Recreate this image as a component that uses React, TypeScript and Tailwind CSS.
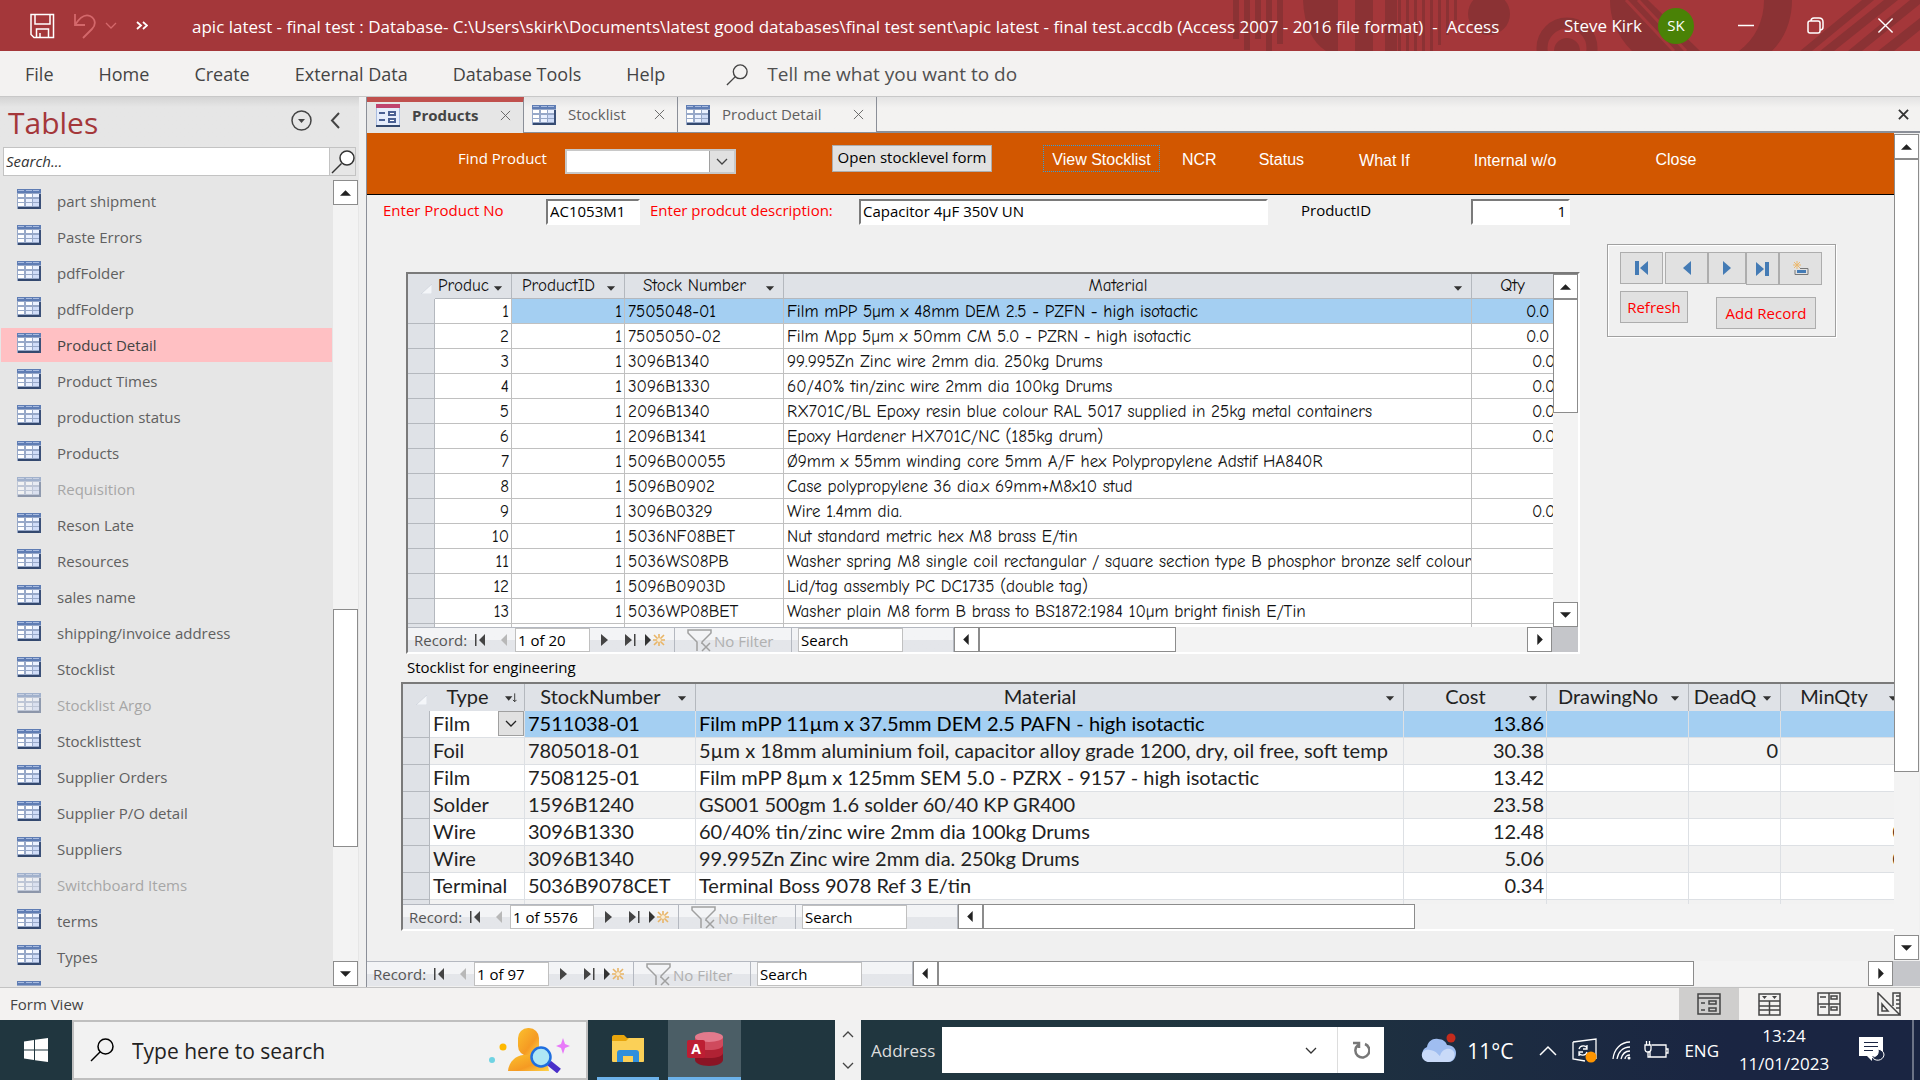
import type { ReactNode } from "react";

const tables = [
  { name: "part shipment" },
  { name: "Paste Errors" },
  { name: "pdfFolder" },
  { name: "pdfFolderp" },
  { name: "Product Detail", selected: true },
  { name: "Product Times" },
  { name: "production status" },
  { name: "Products" },
  { name: "Requisition", hidden: true },
  { name: "Reson Late" },
  { name: "Resources" },
  { name: "sales name" },
  { name: "shipping/invoice address" },
  { name: "Stocklist" },
  { name: "Stocklist Argo", hidden: true },
  { name: "Stocklisttest" },
  { name: "Supplier Orders" },
  { name: "Supplier P/O detail" },
  { name: "Suppliers" },
  { name: "Switchboard Items", hidden: true },
  { name: "terms" },
  { name: "Types" },
  { name: "" },
];

const parts = [
  ["7505048-01", "Film mPP 5µm x 48mm DEM 2.5 - PZFN - high isotactic", "0.0"],
  ["7505050-02", "Film Mpp 5µm x 50mm CM 5.0 - PZRN - high isotactic", "0.0"],
  ["3096B1340", "99.995Zn Zinc wire 2mm dia. 250kg Drums", "0.0"],
  ["3096B1330", "60/40% tin/zinc wire 2mm dia 100kg Drums", "0.0"],
  ["2096B1340", "RX701C/BL Epoxy resin blue colour RAL 5017 supplied in 25kg metal containers", "0.0"],
  ["2096B1341", "Epoxy Hardener HX701C/NC (185kg drum)", "0.0"],
  ["5096B00055", "Ø9mm x 55mm winding core 5mm A/F hex Polypropylene Adstif HA840R", ""],
  ["5096B0902", "Case polypropylene 36 dia.x 69mm+M8x10 stud", ""],
  ["3096B0329", "Wire 1.4mm dia.", "0.0"],
  ["5036NF08BET", "Nut standard metric hex M8 brass E/tin", ""],
  ["5036WS08PB", "Washer spring M8 single coil rectangular / square section type B phosphor bronze self colour", ""],
  ["5096B0903D", "Lid/tag assembly PC DC1735 (double tag)", ""],
  ["5036WP08BET", "Washer plain M8 form B brass to BS1872:1984 10µm bright finish E/Tin", ""],
];

const stock = [
  ["Film", "7511038-01", "Film mPP 11µm x 37.5mm DEM 2.5 PAFN - high isotactic", "13.86", "", ""],
  ["Foil", "7805018-01", "5µm x 18mm aluminium foil, capacitor alloy grade 1200, dry, oil free, soft temp", "30.38", "0", ""],
  ["Film", "7508125-01", "Film mPP 8µm x 125mm SEM 5.0 - PZRX - 9157 - high isotactic", "13.42", "", ""],
  ["Solder", "1596B1240", "GS001 500gm 1.6 solder 60/40 KP GR400", "23.58", "", ""],
  ["Wire", "3096B1330", "60/40% tin/zinc wire 2mm dia 100kg Drums", "12.48", "", "0"],
  ["Wire", "3096B1340", "99.995Zn Zinc wire 2mm dia. 250kg Drums", "5.06", "", "0"],
  ["Terminal", "5036B9078CET", "Terminal Boss 9078 Ref 3 E/tin", "0.34", "", ""],
];

function TableIcon({ className = "" }: { className?: string }) {
  return (
    <svg width="24" height="20" viewBox="0 0 24 20" className={`shrink-0 ${className}`} shapeRendering="crispEdges">
      <rect width="24" height="20" fill="#97a8c8" />
      <rect width="24" height="4" fill="#5f7db4" />
      <path d="M1 1h6M9 1h6M16 1h6" stroke="#a9bce0" transform="translate(0 .5)" />
      <path d="M1 5h6v3H1zM1 10h6v3H1zM1 14h6v3H1zM9 5h6v3H9z" fill="#fff" />
      <path d="M9 10h6v3H9zM9 14h6v3H9zM16 5h6v3h-6z" fill="#eaf1ff" />
      <path d="M16 10h6v3h-6zM16 14h6v3h-6z" fill="#cfdcf8" />
      <path d="M1 18h23v2H1z" fill="#34496f" />
      <path d="M22 5h2v15h-2z" fill="#3b5078" />
    </svg>
  );
}

function FormIcon() {
  return (
    <svg width="24" height="23" viewBox="0 0 24 23" className="shrink-0" shapeRendering="crispEdges">
      <rect width="24" height="23" fill="#a9bce0" />
      <rect x="1" y="4" width="22" height="17" fill="#e6edfb" />
      <rect width="24" height="4" fill="#c0446e" />
      <path d="M3 9h6M3 16h6" stroke="#4a6093" strokeWidth="2" />
      <path d="M13 8h6v3h-6zM13 15h6v3h-6z" fill="#fff" stroke="#4a6093" strokeWidth="2" />
      <path d="M0 21h24v2H0z" fill="#34496f" />
    </svg>
  );
}

function Lens({ size, className = "", flip = false }: { size: number; className?: string; flip?: boolean }) {
  return (
    <svg width={size} height={size} viewBox="0 0 24 24" fill="none" stroke="currentColor" strokeWidth="1.5" className={`shrink-0 ${className}`}>
      {flip ? <circle cx="16" cy="8" r="7" fill="#fff" /> : <circle cx="15.500" cy="8.500" r="7.500" />}
      <path d="M10.500 13.500 1 23" />
    </svg>
  );
}

function Chevron({ className = "" }: { className?: string }) {
  return (
    <svg width="12" height="8" viewBox="0 0 12 8" fill="none" stroke="currentColor" strokeWidth="1.300" className={className}>
      <path d="m1 1 5 5 5-5" />
    </svg>
  );
}

function Cross({ size = 11, weight = 1 }: { size?: number; weight?: number }) {
  return (
    <svg width={size} height={size} viewBox="0 0 12 12" stroke="currentColor" strokeWidth={weight}>
      <path d="m1 1 10 10M11 1 1 11" />
    </svg>
  );
}

const arrows = {
  up: "M5 3 10 8H0z",
  down: "M0 3h10L5 8z",
  left: "M7 0v10L2 5z",
  right: "M3 0v10l5-5z",
};

function ScrollButton({ dir }: { dir: keyof typeof arrows }) {
  return (
    <button aria-label={`Scroll ${dir}`} className="flex size-[25px] shrink-0 items-center justify-center border border-[#8c8c8c] bg-white">
      <svg width="11" height="11" viewBox="0 0 10 10" fill="#222">
        <path d={arrows[dir]} />
      </svg>
    </button>
  );
}

// start and size are fractions of the track between the two buttons
function VScroll({ start, size }: { start: number; size: number }) {
  return (
    <div className="flex w-[25px] shrink-0 flex-col bg-[#f3f3f3]">
      <ScrollButton dir="up" />
      <div className="flex min-h-0 flex-1 flex-col">
        <div style={{ height: `${start * 100}%` }} />
        <div className="border border-[#8c8c8c] bg-white" style={{ height: `${size * 100}%` }} />
      </div>
      <ScrollButton dir="down" />
    </div>
  );
}

function HScroll({ size, end = true }: { size: number; end?: boolean }) {
  return (
    <div className="flex h-[25px] min-w-0 flex-1 bg-[#f3f3f3]">
      <ScrollButton dir="left" />
      <div className="flex-1">
        <div className="h-full border border-[#8c8c8c] bg-white" style={{ width: `${size * 100}%` }} />
      </div>
      {end && <ScrollButton dir="right" />}
    </div>
  );
}

function NavButton({ label, children, className = "w-[25px]" }: { label: string; children: ReactNode; className?: string }) {
  return (
    <button aria-label={label} className={`flex h-6 shrink-0 items-center justify-center ${className}`}>
      {children}
    </button>
  );
}

function RecordNav({ id, position, wide = false }: { id: string; position: string; wide?: boolean }) {
  return (
    <div className="flex h-[25px] shrink-0 items-center border-t border-r border-[#b4b8c0] bg-linear-to-b from-[#f3f4f6] from-50% to-[#e4e6ea] to-50% pr-[50px] text-[15px] text-[#444]">
      <label htmlFor={`${id}-pos`} className="w-[60px] pl-[6px] text-[#555]">Record:</label>
      <NavButton label="First record">
        <svg width="12" height="12" viewBox="0 0 12 12" fill="currentColor"><path d="M0 0h1.500v12H0zM10 0v12L4 6z" /></svg>
      </NavButton>
      <NavButton label="Previous record" className="w-[22px] text-[#b8b8b8]">
        <svg width="7" height="12" viewBox="0 0 7 12" fill="currentColor"><path d="M6 0v12L0 6z" /></svg>
      </NavButton>
      <input id={`${id}-pos`} defaultValue={position} className={`h-6 border border-[#c0c0c0] bg-white pl-[2px] text-[15px] text-black ${wide ? "w-[84px]" : "w-[75px]"}`} />
      <NavButton label="Next record" className="ml-[2px] w-[25px]">
        <svg width="7" height="12" viewBox="0 0 7 12" fill="currentColor"><path d="M0 0v12l7-6z" /></svg>
      </NavButton>
      <NavButton label="Last record">
        <svg width="12" height="12" viewBox="0 0 12 12" fill="currentColor"><path d="M10 0h1.500v12H10zM1 0v12l7-6z" /></svg>
      </NavButton>
      <NavButton label="New record">
        <svg width="20" height="14" viewBox="0 0 20 14">
          <path d="M0 1v12l6-6z" fill="#333" />
          <path d="M14 1v12M8 7h12M9 2l10 10M19 2 9 12" stroke="#e9b566" strokeWidth="1.600" />
          <circle cx="14" cy="7" r="2" fill="#f8ecd6" />
        </svg>
      </NavButton>
      <button disabled className="ml-[7px] flex h-6 w-[118px] items-center border-x border-[#b4b8c0] pl-3 text-[#b0b0b0]">
        <svg width="25" height="24" viewBox="0 0 25 24" fill="none" stroke="#a0a0a0" strokeWidth="1.500">
          <path d="M10 23v-9L1 5V2h23v3l-9 9v2" />
          <path d="m15 15 8 8M23 15l-8 8" />
        </svg>
        <span className="pt-[2px] pl-[2px] whitespace-nowrap">No Filter</span>
      </button>
      <input aria-label="Search" defaultValue="Search" className="ml-[6px] h-6 w-[105px] border border-[#c0c0c0] bg-white pl-[2px] text-[15px] text-black" />
    </div>
  );
}

function ColumnHead({ label, sorted = false }: { label: string; sorted?: boolean }) {
  return (
    <div className="flex items-center pr-[7px]">
      <span className="min-w-0 flex-1 overflow-hidden whitespace-nowrap text-center">{label}</span>
      <button aria-label={`Filter ${label}`} className="mt-1 flex w-3 shrink-0 justify-center">
        <svg width="13" height="10" viewBox="0 0 13 10">
          <path d={sorted ? "M0 3h8L4 8z" : "M2 3h9L6.500 8z"} fill="#333" />
          {sorted && <path d="M10.500 0v9M8.500 7l2 2 2-2" stroke="#333" fill="none" />}
        </svg>
      </button>
    </div>
  );
}

function SelectAll() {
  return (
    <svg width="11" height="10" viewBox="0 0 11 10" className="mt-1 mr-[3px] ml-auto">
      <path d="M11 0v10H0z" fill="#f4f6f9" stroke="#c5cbd4" strokeWidth=".5" />
    </svg>
  );
}

function PartsGrid() {
  const head = "border-r border-b border-[#b4b8be] bg-[#dfe2e7] p-0 font-normal";
  return (
    <table className="w-[1145px] table-fixed border-separate border-spacing-0 font-['Comic_Sans_MS','Comic_Neue',Lato,sans-serif] text-[17px] leading-[22px] text-[#111]">
      <colgroup>
        <col className="w-[27px]" />
        <col className="w-[77px]" />
        <col className="w-[113px]" />
        <col className="w-[159px]" />
        <col className="w-[688px]" />
        <col className="w-[81px]" />
      </colgroup>
      <thead>
        <tr className="h-[25px]">
          <th className="bg-[#dfe2e7] p-0"><SelectAll /></th>
          <th className={head}><ColumnHead label="Produc" /></th>
          <th className={head}><ColumnHead label="ProductID" /></th>
          <th className={head}><ColumnHead label="Stock Number" /></th>
          <th className={head}><ColumnHead label="Material" /></th>
          <th className="border-b border-[#b4b8be] bg-[#dfe2e7] p-0 font-normal">Qty</th>
        </tr>
      </thead>
      <tbody>
        {[...parts, ["", "", ""]].map((row, i) => {
          const cell = `h-[25px] overflow-hidden whitespace-nowrap border-r border-b border-[#c0c0c0] p-0 pt-[2px] ${i === 0 ? "bg-[#a4cff2] text-black" : "bg-white"}`;
          return (
            <tr key={i}>
              <td className="border-r border-b border-[#b4b8be] bg-[#dfe2e7]" />
              <td className="border-r border-b border-[#c0c0c0] bg-white p-0 pt-[2px] pr-[2px] text-right">{row[0] && i + 1}</td>
              <td className={`${cell} pr-[2px] text-right`}>{row[0] && 1}</td>
              <td className={`${cell} pl-[3px]`}>{row[0]}</td>
              <td className={`${cell} pl-[3px]`}>{row[1]}</td>
              <td className={`${cell} border-r-0 ${i < 2 ? "pl-[54px]" : "pl-[60px]"}`}>{row[2]}</td>
            </tr>
          );
        })}
      </tbody>
    </table>
  );
}

function StockGrid() {
  const head = "border-r border-[#b4b8be] bg-[#dfe2e7] p-0 pb-[3px] font-normal leading-6";
  return (
    <table className="w-[1504px] table-fixed border-separate border-spacing-0 font-['Tw_Cen_MT',Lato,sans-serif] text-xl leading-[25px] text-[#222]">
      <colgroup>
        <col className="w-[27px]" />
        <col className="w-[95px]" />
        <col className="w-[171px]" />
        <col className="w-[708px]" />
        <col className="w-[143px]" />
        <col className="w-[142px]" />
        <col className="w-[92px]" />
        <col className="w-[126px]" />
      </colgroup>
      <thead>
        <tr className="h-[27px]">
          <th className="bg-[#dfe2e7] p-0"><SelectAll /></th>
          <th className={head}><ColumnHead label="Type" sorted /></th>
          {["StockNumber", "Material", "Cost", "DrawingNo", "DeadQ", "MinQty"].map((label) => (
            <th key={label} className={head}><ColumnHead label={label} /></th>
          ))}
        </tr>
      </thead>
      <tbody>
        {[...stock, ["", "", "", "", "", ""]].map((row, i) => {
          const tone = i === 0 ? "bg-[#a4cff2] text-black" : i % 2 ? "bg-[#f2f2f2]" : "bg-white";
          const cell = `h-[27px] overflow-hidden whitespace-nowrap border-r border-b border-[#dde0e4] p-0 pb-px ${tone}`;
          return (
            <tr key={i}>
              <td className="border-r border-b border-[#b4b8be] bg-[#dfe2e7]" />
              <td className={`overflow-hidden border-r border-b border-[#dde0e4] p-0 pb-px pl-[3px] ${i % 2 ? "bg-[#f2f2f2]" : "bg-white"}`}>
                <div className="flex items-center justify-between">
                  {row[0]}
                  {i === 0 && (
                    <button aria-label="Choose type" className="flex h-[25px] w-[26px] items-center justify-center border border-[#a0a0a0] bg-[#e1e1e1]">
                      <Chevron />
                    </button>
                  )}
                </div>
              </td>
              <td className={`${cell} pl-[3px]`}>{row[1]}</td>
              <td className={`${cell} pl-[3px]`}>{row[2]}</td>
              <td className={`${cell} pr-[2px] text-right`}>{row[3]}</td>
              <td className={cell} />
              <td className={`${cell} pr-[2px] text-right`}>{row[4]}</td>
              <td className={`${cell} pr-[2px] text-right`}>{row[5]}</td>
            </tr>
          );
        })}
      </tbody>
    </table>
  );
}

function TitleBar() {
  return (
    <header className="relative flex h-[51px] shrink-0 items-center overflow-hidden bg-[#a4373a] text-white">
      <svg width="690" height="51" viewBox="0 0 690 51" className="absolute top-0 right-0" fill="#8b3234">
        <path d="M3 0h6v39H3zM14 0h6v50h-6zM25 0h6v39h-6zM36 0h6v51h-6zM47 0h6v44h-6z" />
        <path d="M73 0h35v51h-12C82 42 74 25 73 0zM125 0h18v51h-18zM155 0h12v51h-12z" />
        <path d="M168 0h3v51h-3zM176 0h3v51h-3zM184 0h3v51h-3zM192 0h3v51h-3zM200 0h3v51h-3zM208 0h3v45h-3zM216 0h3v35h-3zM224 0h3v20h-3z" />
        <circle cx="259" cy="14" r="21" />
        <circle cx="337" cy="48" r="25" fill="none" stroke="#8b3234" strokeWidth="11" />
        <circle cx="337" cy="51" r="13" />
        <path d="M380 0h38l52 51h-68C386 35 380 18 380 0z" />
        <path d="m396 0 48 51M408 0l48 51" stroke="#a4373a" strokeWidth="3" />
        <path d="M534 0h28c0 20-7 38-20 51h-33c16-12 25-30 25-51z" />
        <path d="M632 0h12l-62 51h-12zM654 0h14l-64 51h-14zM680 0h10v4l-58 47h-14zM690 18v12l-26 21h-16z" />
      </svg>
      <div className="relative flex w-full items-center">
        <button aria-label="Save" className="ml-[29px]">
          <svg width="26" height="26" viewBox="0 0 26 26" fill="none" stroke="currentColor" strokeWidth="1.500">
            <path d="M2 1.500h22.500v23H5L2 21.500zM6 2v9h15V2M7.500 24v-8h12v8M11 20v4" />
          </svg>
        </button>
        <button aria-label="Undo" className="ml-[18px] flex items-center gap-2 text-[#d4686b]">
          <svg width="24" height="26" viewBox="0 0 24 26" fill="none" stroke="currentColor" strokeWidth="1.800">
            <path d="M2 1v11h10M2 12C7 4 12 1 17 3c6 3 6 9 2 13L10 25" />
          </svg>
          <Chevron />
        </button>
        <button aria-label="More commands" className="ml-[19px]">
          <svg width="12" height="9" viewBox="0 0 12 9" fill="none" stroke="currentColor" strokeWidth="1.800">
            <path d="m1 1 4 3.500L1 8M7 1l4 3.500L7 8" />
          </svg>
        </button>
        <h1 className="ml-11 pt-[2px] whitespace-pre text-[17px]">
          {"apic latest - final test : Database- C:\\Users\\skirk\\Documents\\latest good databases\\final test sent\\apic latest - final test.accdb (Access 2007 - 2016 file format)  -  Access"}
        </h1>
        <div className="ml-auto flex items-center">
          <button className="flex items-center gap-4 text-[17px]">
            Steve Kirk
            <span className="flex size-9 items-center justify-center rounded-full bg-[#4a8206] text-[15px]">SK</span>
          </button>
          <button aria-label="Minimize" className="ml-[44px]">
            <svg width="16" height="16" viewBox="0 0 16 16" stroke="currentColor" strokeWidth="1.500"><path d="M0 7.500h16" /></svg>
          </button>
          <button aria-label="Restore" className="ml-[53px]">
            <svg width="17" height="17" viewBox="0 0 17 17" fill="none" stroke="currentColor" strokeWidth="1.500">
              <rect x="1" y="4" width="12" height="12" rx="2" />
              <path d="M4 4c0-2 1-3 3-3h5c3 0 4 1 4 4v5c0 2-1 3-3 3" />
            </svg>
          </button>
          <button aria-label="Close window" className="mr-[26px] ml-[53px]"><Cross size={17} /></button>
        </div>
      </div>
    </header>
  );
}

function Ribbon() {
  return (
    <nav className="flex h-[46px] shrink-0 items-center border-b border-[#c8c8c8] bg-[#f3f2f1] pt-[2px] pl-[25px] text-[18px] text-[#444]">
      <div className="flex items-center gap-[45px]">
        {["File", "Home", "Create", "External Data", "Database Tools", "Help"].map((item) => (
          <button key={item}>{item}</button>
        ))}
      </div>
      <label className="ml-[61px] flex items-center gap-[19px]">
        <Lens size={22} />
        <input placeholder="Tell me what you want to do" className="w-80 bg-transparent text-[19px] placeholder:text-[#505050]" />
      </label>
    </nav>
  );
}

function Sidebar() {
  return (
    <aside className="flex w-[359px] shrink-0 flex-col bg-[#e6e6e6]">
      <div className="flex h-[50px] items-center bg-linear-to-b from-[#d4d4d4] to-[#e6e6e6] to-20% pl-2">
        <h2 className="text-[30px] text-[#a4373a]">Tables</h2>
        <button aria-label="Table list options" className="mb-1 ml-auto">
          <svg width="21" height="21" viewBox="0 0 21 21" fill="none" stroke="#444" strokeWidth="1.500">
            <circle cx="10.500" cy="10.500" r="9.500" />
            <path d="M7 9h7l-3.500 4z" fill="#444" stroke="none" />
          </svg>
        </button>
        <button aria-label="Collapse pane" className="mr-[19px] mb-1 ml-[18px]">
          <svg width="10" height="17" viewBox="0 0 10 17" fill="none" stroke="#444" strokeWidth="2"><path d="M9 1 2 8.500 9 16" /></svg>
        </button>
      </div>
      <div className="ml-[3px] flex h-[29px] w-[353px] border border-[#c3c3c3]">
        <input aria-label="Search tables" placeholder="Search..." className="min-w-0 flex-1 bg-white pl-[2px] text-[15px] italic placeholder:text-[#333]" />
        <button aria-label="Run search" className="flex w-[26px] items-center justify-center border-l border-[#c3c3c3] text-[#333]">
          <Lens size={24} flip />
        </button>
      </div>
      <div className="mt-1 flex min-h-0 flex-1 pb-px">
        <ul className="flex min-w-0 flex-1 flex-col gap-[2px] overflow-hidden pt-1 pr-px pl-px">
          {tables.map((t, i) => (
            <li key={i} className={`h-[34px] shrink-0 ${t.selected ? "bg-[#ffc0c3]" : ""}`}>
              <button className={`flex h-full w-full items-center gap-4 pl-4 text-left text-[15px] ${t.hidden ? "text-[#a6a6a6]" : t.selected ? "text-[#444]" : "text-[#606060]"}`}>
                <TableIcon className={t.hidden ? "mb-1 opacity-50" : "mb-1"} />
                {t.name}
              </button>
            </li>
          ))}
        </ul>
        <VScroll start={0.534} size={0.315} />
        <div className="w-px" />
      </div>
    </aside>
  );
}

function DocumentTabs() {
  return (
    <div className="flex h-9 shrink-0 items-stretch bg-linear-to-b from-[#e3e3e3] to-[#f3f2f1] to-30% text-[15px] text-[#606060]">
      <div className="flex w-[157px] items-center border-t-[5px] border-r border-[#c0504d] border-r-[#8b8f98] bg-[#e6e6e6] pr-3 pb-1 pl-[9px]">
        <FormIcon />
        <button className="ml-3 font-bold text-[#444]">Products</button>
        <button aria-label="Close Products" className="ml-auto"><Cross /></button>
      </div>
      <div className="flex w-[154px] items-center border-r border-b border-[#8b8f98] pr-3 pl-2">
        <TableIcon />
        <button className="ml-3">Stocklist</button>
        <button aria-label="Close Stocklist" className="ml-auto"><Cross /></button>
      </div>
      <div className="flex w-[199px] items-center border-r border-b border-[#8b8f98] pr-3 pl-2">
        <TableIcon />
        <button className="ml-3">Product Detail</button>
        <button aria-label="Close Product Detail" className="ml-auto"><Cross /></button>
      </div>
      <div className="flex flex-1 items-center justify-end border-b-2 border-[#8b8f98] pr-[11px] text-[#333]">
        <button aria-label="Close document"><Cross weight={2} /></button>
      </div>
    </div>
  );
}

function FormHeader() {
  return (
    <div className="flex h-[62px] shrink-0 items-start border-b border-black bg-[#d25700] pt-3 font-['Liberation_Sans',Arial,sans-serif] text-base leading-[29px] text-white">
      <label htmlFor="find" className="ml-[91px] w-[107px] font-['Tahoma','Open_Sans',sans-serif] text-[15px] leading-[27px]">Find Product</label>
      <div className="relative mt-1 h-[25px] w-[171px] border-2 border-[#c8c8c8] bg-white text-[#444]">
        <select id="find" className="h-full w-full appearance-none" defaultValue="">
          <option value="" />
        </select>
        <span className="pointer-events-none absolute inset-y-0 right-0 flex w-[25px] items-center justify-center border-l border-[#a0a0a0] bg-[#e1e1e1]">
          <Chevron />
        </span>
      </div>
      <button className="ml-24 h-[27px] w-40 border border-[#adadad] bg-[#e1e1e1] pb-1 font-['Tahoma','Open_Sans',sans-serif] text-[15px] leading-5 text-black">
        Open stocklevel form
      </button>
      <button className="ml-[51px] h-[27px] w-[117px] border border-dotted border-[#2f9fe0] leading-[27px]">View Stocklist</button>
      <button className="ml-[22px]">NCR</button>
      <button className="ml-[42px]">Status</button>
      <button className="ml-[55px] pt-px">What If</button>
      <button className="ml-16 pt-px">Internal w/o</button>
      <button className="ml-[99px]">Close</button>
    </div>
  );
}

const sunken = "h-[26px] border-2 border-t-[#7a7a7a] border-l-[#7a7a7a] border-r-white border-b-white bg-white px-[2px] pb-[2px] text-[15px] text-black";

const moves = [
  { label: "First", icon: "M0 0h4v14H0zM13 0v14L5 7z", w: 13, box: "h-8 w-[43px]" },
  { label: "Previous", icon: "M8 0v14L0 7z", w: 8, box: "ml-[2px] h-8 w-[43px]" },
  { label: "Next", icon: "M0 0v14l8-7z", w: 8, box: "h-8 w-[38px]" },
  { label: "Last", icon: "M9 0h4v14H9zM0 0v14l8-7z", w: 13, box: "h-[33px] w-[33px]" },
];

function RecordButtons() {
  const face = "flex items-center justify-center border border-[#adadad] bg-[#e1e1e1]";
  return (
    <div className="mt-[-28px] ml-[27px] h-[93px] w-[229px] border border-[#a0a0a0] px-3 pt-[7px] shadow-[inset_1px_1px_0_#fff,1px_1px_0_#fff]">
      <div className="flex">
        {moves.map((m) => (
          <button key={m.label} aria-label={`${m.label} record`} className={`${face} ${m.box}`}>
            <svg width={m.w} height="14" viewBox={`0 0 ${m.w} 14`} fill="#447bb5"><path d={m.icon} /></svg>
          </button>
        ))}
        <button aria-label="New record" className={`${face} h-[33px] w-[43px]`}>
          <svg width="16" height="16" viewBox="0 0 16 16" fill="none">
            <path d="M4 0v8M0 4h8M1 1l6 6M7 1 1 7" stroke="#ecb96f" />
            <path d="M7 7.500h8v6H2V9" stroke="#777" />
            <path d="M4 9h9v3H4z" fill="#447bb5" />
          </svg>
        </button>
      </div>
      <div className="mt-[6px] flex items-start justify-between pr-[7px] text-[15px] text-[#f00]">
        <button className={`${face} h-8 w-[68px]`}>Refresh</button>
        <button className={`${face} mt-[6px] h-8 w-[100px] whitespace-nowrap`}>Add Record</button>
      </div>
    </div>
  );
}

function ProductForm() {
  return (
    <div className="min-w-0 flex-1 overflow-hidden bg-[#f0f0f0] font-['Tahoma','Open_Sans',sans-serif] text-[15px] text-black">
      <FormHeader />
      <div className="flex items-start pt-1 leading-[22px]">
        <label htmlFor="product-no" className="ml-4 w-[163px] text-[#f00]">Enter Product No</label>
        <input id="product-no" defaultValue="AC1053M1" className={`${sunken} w-[94px]`} />
        <label htmlFor="description" className="ml-[10px] w-[209px] whitespace-nowrap text-[#f00]">Enter prodcut description:</label>
        <input id="description" defaultValue="Capacitor 4µF 350V UN" className={`${sunken} w-[409px]`} />
        <label htmlFor="product-id" className="ml-[33px] w-[170px]">ProductID</label>
        <input id="product-id" defaultValue="1" className={`${sunken} w-[99px] text-right`} />
      </div>
      <div className="mt-[47px] flex items-start">
        <section aria-label="Product parts" className="ml-[39px] shrink-0 border-2 border-t-[#7a7a7a] border-l-[#7a7a7a] border-r-white border-b-white">
          <div className="flex h-[353px] overflow-hidden">
            <PartsGrid />
            <VScroll start={0} size={0.376} />
          </div>
          <div className="flex font-['Segoe_UI','Open_Sans',sans-serif]">
            <RecordNav id="parts" position="1 of 20" />
            <HScroll size={0.36} />
            <div className="w-[26px] bg-[#c5c6ca]" />
          </div>
        </section>
        <RecordButtons />
      </div>
      <h3 className="ml-10 h-7 leading-[27px]">Stocklist for engineering</h3>
      <section aria-label="Stocklist for engineering" className="ml-[34px] border-2 border-r-0 border-t-[#7a7a7a] border-l-[#7a7a7a] border-b-white">
        <div className="h-[220px] overflow-hidden">
          <StockGrid />
        </div>
        <div className="flex font-['Segoe_UI','Open_Sans',sans-serif]">
          <RecordNav id="stock" position="1 of 5576" wide />
          <HScroll size={0.474} end={false} />
        </div>
      </section>
    </div>
  );
}

function StatusBar() {
  return (
    <footer className="flex h-[33px] shrink-0 items-center border-t border-[#c3c3c3] bg-[#f3f2f1] pl-[10px] text-[15px] text-[#444]">
      Form View
      <div className="mr-px ml-auto flex h-full">
        <button aria-label="Form View" className="flex w-[60px] items-center justify-center bg-[#cfcecd]">
          <svg width="24" height="22" viewBox="0 0 24 22" fill="none" stroke="#444" strokeWidth="1.500">
            <path d="M1 1h22v20H1zM1 5h22M4 10h4M4 17h4M12 8h7v3h-7zM12 15h7v3h-7z" />
          </svg>
        </button>
        <button aria-label="Datasheet View" className="flex w-[60px] items-center justify-center">
          <svg width="23" height="23" viewBox="0 0 23 23" fill="none" stroke="#444" strokeWidth="1.500">
            <path d="M1 1h21v21H1zM1 8h21M1 13h21M1 17h21M11.500 8v14" />
            <path d="M4 3h5L6.500 6zM14 3h5l-2.500 3z" fill="#444" stroke="none" />
          </svg>
        </button>
        <button aria-label="Layout View" className="flex w-[60px] items-center justify-center">
          <svg width="24" height="24" viewBox="0 0 24 24" fill="none" stroke="#444" strokeWidth="1.500">
            <path d="M1 1h22v22H1zM12 1v22M1 12h22M3 5h6M3 15h6M14 4h6v3h-6zM14 15h6v3h-6z" />
          </svg>
        </button>
        <button aria-label="Design View" className="flex w-[60px] items-center justify-center">
          <svg width="24" height="24" viewBox="0 0 24 24" fill="none" stroke="#444" strokeWidth="1.500">
            <path d="M1 1v22h22zM5 12v7h6zM16 14V1h7v22M19 4h4M19 8h4M19 12h4M19 16h4" />
          </svg>
        </button>
      </div>
    </footer>
  );
}

function Taskbar() {
  return (
    <div className="flex h-[60px] shrink-0 items-stretch bg-linear-to-r from-[#20363f] from-60% to-[#1a2542] to-90% text-white">
      <button aria-label="Start" className="flex w-[72px] items-center justify-center">
        <svg width="24" height="24" viewBox="0 0 24 24" fill="#fff">
          <path d="M0 3.500 10 2v9.500H0zM11 1.800 24 0v11.500H11zM0 12.500h10V22L0 20.500zM11 12.500h13V24l-13-1.800z" />
        </svg>
      </button>
      <label className="flex w-[516px] items-center border-2 border-[#bfbfbf] bg-[#f2f2f2] pl-4 text-black">
        <Lens size={24} />
        <input placeholder="Type here to search" className="ml-[18px] w-[300px] pt-1 text-[21px] placeholder:text-[#222]" />
        <svg width="82" height="46" viewBox="0 0 82 46" className="mr-4 ml-auto">
          <defs>
            <linearGradient id="person" x1="0" x2="1" y1="0" y2="1">
              <stop offset="0" stopColor="#fbc02d" />
              <stop offset=".6" stopColor="#f59a23" />
              <stop offset="1" stopColor="#ffd54a" />
            </linearGradient>
          </defs>
          <rect x="30" y="1" width="21" height="28" rx="10" fill="url(#person)" />
          <path d="M20 44c1-10 8-15 15-16h12c8 2 13 8 14 16z" fill="url(#person)" />
          <circle cx="15" cy="20" r="3.500" fill="#ffb900" />
          <circle cx="4" cy="33" r="3" fill="#6fd3e3" />
          <path d="m61 36 10 8" stroke="#4a2fc9" strokeWidth="6" />
          <circle cx="53" cy="30" r="9.500" fill="#aee6f5" stroke="#1f6fe0" strokeWidth="2.500" />
          <path d="m75 11 2 6 5 2-5 2-2 6-2-6-5-2 5-2z" fill="#e879f9" />
        </svg>
      </label>
      <button aria-label="File Explorer" className="flex w-20 flex-col items-center justify-end">
        <svg width="32" height="28" viewBox="0 0 32 28" className="mb-[14px]">
          <path d="M0 2c0-1 1-2 2-2h10l3 3h16v5H0z" fill="#e8a50c" />
          <path d="M0 6h14l3-3h15v23c0 1-1 1-1 1H1c-1 0-1-1-1-1z" fill="#fbd057" />
          <path d="M5 27V18c0-2 1-3 3-3h16c2 0 3 1 3 3v9h-6v-6H11v6z" fill="#2f8fdc" />
        </svg>
        <span className="h-[3px] w-[62px] bg-[#6cb2ea]" />
      </button>
      <button aria-label="Access" className="flex w-[73px] flex-col items-center justify-end border-b-[3px] border-[#6cb2ea] bg-[#4b5e66] pb-[11px]">
        <svg width="36" height="34" viewBox="0 0 36 34">
          <path d="M8 5v23c0 3 6 6 14 6s14-3 14-6V5z" fill="#8a1424" />
          <path d="M8 5v16c0 3 6 5 14 5s14-2 14-5V5z" fill="#b02234" />
          <path d="M8 5v8c0 3 6 5 14 5s14-2 14-5V5z" fill="#cf4a5d" />
          <ellipse cx="22" cy="5" rx="14" ry="5" fill="#e37a8c" />
          <rect y="8" width="18" height="18" rx="2" fill="#bd1e33" />
          <text x="9" y="22" textAnchor="middle" fontSize="14" fontWeight="bold" fill="#fff">A</text>
        </svg>
      </button>
      <div className="ml-[94px] flex w-[26px] flex-col items-center justify-between bg-[#f1f1f1] py-[10px] text-[#444]">
        <button aria-label="Scroll toolbar up"><Chevron className="rotate-180" /></button>
        <button aria-label="Scroll toolbar down"><Chevron /></button>
      </div>
      <label htmlFor="address" className="ml-[10px] flex w-[71px] items-center pt-[2px] text-[17px] text-[#ddd]">Address</label>
      <div className="relative my-[7px] min-w-0 flex-1 bg-white text-[#333]">
        <select id="address" className="h-full w-full appearance-none"><option value="" /></select>
        <Chevron className="pointer-events-none absolute top-5 right-5" />
      </div>
      <button aria-label="Refresh address" className="my-[7px] flex w-[47px] items-center justify-center border-l border-[#ddd] bg-white">
        <svg width="18" height="18" viewBox="0 0 18 18" fill="none" stroke="#777" strokeWidth="2.500">
          <path d="M1 2h6v5M6 4a7 7 0 1 0 7-1" />
        </svg>
      </button>
      <button className="ml-9 flex items-center gap-[11px] text-[21px]">
        <svg width="36" height="30" viewBox="0 0 36 30" className="mb-1">
          <path d="M8 29a8 8 0 0 1-1-15C8 8 13 5 18 6c5 0 8 3 9 6 6 0 9 4 9 8s-2 9-8 9z" fill="#9fbdf0" />
          <path d="M8 29c-9-2-8-14 2-12 7 1 8 5 10 6 2-9 12-9 14-4 2 6-2 10-6 10z" fill="#c9daf8" />
          <circle cx="31" cy="5" r="4.500" fill="#c42b1c" />
        </svg>
        <span className="pt-1">11°C</span>
      </button>
      <div className="ml-[26px] flex items-center">
        <button aria-label="Show hidden icons">
          <svg width="18" height="11" viewBox="0 0 18 11" fill="none" stroke="#fff" strokeWidth="1.500"><path d="m1 10 8-8 8 8" /></svg>
        </button>
        <svg width="25" height="25" viewBox="0 0 25 25" fill="none" stroke="#fff" strokeWidth="1.300" className="ml-[15px]">
          <path d="M1 4 24 1v20M1 4v17l12 2M7 11c1-4 7-4 8-1M15 7v4h-4M15 14c-1 4-7 4-8 1M7 18v-4h4" />
          <circle cx="19" cy="19" r="5.500" fill="#ff9500" stroke="none" />
        </svg>
        <svg width="19" height="19" viewBox="0 0 19 19" fill="none" stroke="#fff" strokeWidth="1.300" className="ml-[15px]">
          <path d="M1 18C2 8 9 1 18 1M5 18c1-7 6-12 13-12M9 18c1-4 4-8 9-8M13 18c0-2 2-4 5-4" />
          <circle cx="17" cy="17" r="1.500" fill="#fff" stroke="none" />
        </svg>
        <svg width="25" height="18" viewBox="0 0 25 18" fill="none" stroke="#fff" strokeWidth="1.300" className="ml-[13px]">
          <path d="M8 4h14v12H6v-5M22 8h2v4h-2M1 4h6v4c0 2-1 3-3 3s-3-1-3-3zM2.500 4V0M5.500 4V0M4 11v5h3" />
        </svg>
        <button className="ml-[15px] pt-[2px] text-[17px]">ENG</button>
        <button className="ml-[17px] w-[96px] text-center text-[17px] leading-7">
          13:24
          <br />
          11/01/2023
        </button>
        <button aria-label="Notifications" className="ml-[27px]">
          <svg width="26" height="26" viewBox="0 0 26 26" fill="#fff">
            <path d="M0 0h24v19H13v5l-5-5H0z" />
            <path d="M5 5.500h14M5 9.500h14M5 13.500h9" stroke="#1a2542" strokeWidth="1.200" />
            <path d="M19 12c1 5-1 8-6 8 3 5 11 4 12-2 0-3-2-5-6-6z" fill="#1a2542" stroke="#fff" />
          </svg>
        </button>
      </div>
      <div className="mr-[6px] ml-[27px] w-[2px] bg-[#6b7386]" />
    </div>
  );
}

export default function App() {
  return (
    <div className="flex h-screen flex-col overflow-hidden bg-[#f0f0f0] font-['Segoe_UI','Open_Sans',sans-serif]">
      <TitleBar />
      <Ribbon />
      <div className="flex min-h-0 flex-1">
        <Sidebar />
        <main className="ml-[7px] flex min-w-0 flex-1 flex-col border-l border-[#8b8f98]">
          <DocumentTabs />
          <div className="flex min-h-0 flex-1">
            <ProductForm />
            <div className="flex pt-px pb-px"><VScroll start={0} size={0.79} /></div>
            <div className="w-px" />
          </div>
          <div className="flex shrink-0 pb-px">
            <RecordNav id="products" position="1 of 97" />
            <HScroll size={0.813} />
            <div className="w-[27px] bg-[#c5c6ca]" />
          </div>
        </main>
      </div>
      <StatusBar />
      <Taskbar />
    </div>
  );
}
